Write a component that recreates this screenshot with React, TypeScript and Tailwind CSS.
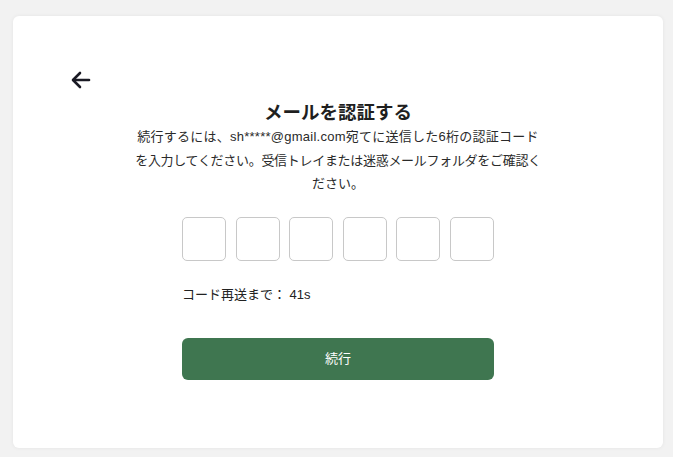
import React from "react";

export default function App() {
  const font = { fontFamily: '"Liberation Sans", "Noto Sans CJK JP", sans-serif' };
  return (
    <div className="w-[673px] h-[457px] bg-[#f2f2f2] pt-[16px] pl-[13px]" style={font}>
      <div className="w-[650px] h-[432px] bg-white rounded-[6px] shadow-[0_0_4px_rgba(0,0,0,0.06)] flex flex-col pt-[51px]">
        <div className="pl-[56px] h-[26px] flex items-center">
          <svg width="24" height="24" viewBox="0 0 24 24" fill="none" stroke="#1a1a24" strokeWidth="2.6" strokeLinecap="round" strokeLinejoin="round">
            <path d="M20 12H4.5" />
            <path d="M11 5l-7 7 7 7" />
          </svg>
        </div>
        <div className="flex flex-col items-center">
          <h1 className="text-[18.5px] leading-[24px] font-bold text-[#1f1f1f] mt-[8px]">メールを認証する</h1>
          <div className="flex flex-col items-center text-[13px] leading-[23.5px] text-[#2a2a2a] whitespace-nowrap">
            <span className="tracking-[0.25px]">続行するには、sh*****@gmail.com宛てに送信した6桁の認証コード</span>
            <span className="tracking-[-0.3px]">を入力してください。受信トレイまたは迷惑メールフォルダをご確認く</span>
            <span>ださい。</span>
          </div>
          <div className="w-[312px] mt-[21px] flex flex-col">
            <div className="flex justify-between">
              {[0, 1, 2, 3, 4, 5].map((i) => (
                <div key={i} className="w-[44px] h-[44px] border border-[#c8c8c8] rounded-[5px]" />
              ))}
            </div>
            <div className="mt-[24px] text-[13px] leading-[20px] text-[#222]">コード再送まで： 41s</div>
            <button className="mt-[33px] h-[42px] w-full rounded-[6px] bg-[#3f7650] text-white text-[13px]">続行</button>
          </div>
        </div>
      </div>
    </div>
  );
}
